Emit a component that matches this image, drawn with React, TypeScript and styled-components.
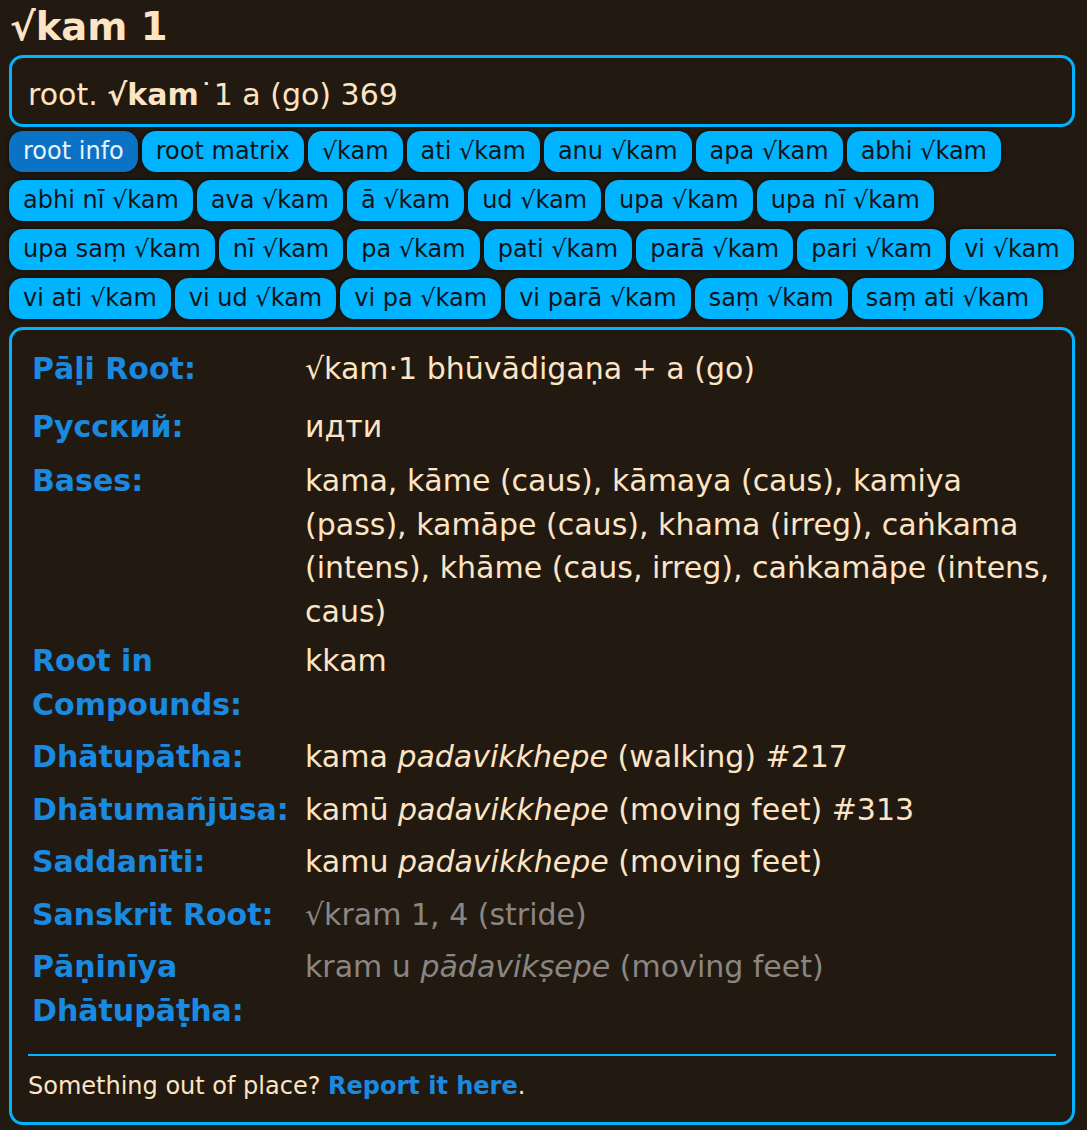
import React from "react";
import styled, { createGlobalStyle } from "styled-components";

const GlobalStyle = createGlobalStyle`
  html, body {
    margin: 0;
    padding: 0;
    background: #221a11;
  }
  body {
    font-family: "DejaVu Sans", "Noto Sans", sans-serif;
    color: #fde4c4;
  }
`;

const Page = styled.div`
  padding: 0 12px 8px 9px;
`;

const Title = styled.h1`
  margin: 0;
  padding: 2px 0 0 1px;
  font-size: 38.5px;
  line-height: 50px;
  font-weight: bold;
  color: #fde4c4;
`;

const Summary = styled.div`
  margin-top: 3px;
  border: 3px solid #00b4ff;
  border-radius: 14px;
  padding: 18px 16px 10px 16px;
  font-size: 30px;
  line-height: 38px;
`;

const ButtonBar = styled.div`
  display: flex;
  flex-wrap: wrap;
  gap: 8px 4px;
  margin-top: 4px;
`;

const Tab = styled.button<{ $active?: boolean }>`
  font-family: "DejaVu Sans", sans-serif;
  font-size: 24px;
  line-height: 29px;
  padding: 6px 14px;
  border: none;
  border-radius: 14px;
  background: ${(p) => (p.$active ? "#0a73c6" : "#00b4ff")};
  color: ${(p) => (p.$active ? "#eaf2fb" : "#101418")};
  box-shadow: 0 0 5px rgba(0, 0, 0, 0.7);
  cursor: pointer;
`;

const InfoBox = styled.div`
  margin-top: 8px;
  border: 3px solid #00b4ff;
  border-radius: 14px;
  padding: 17px 16px 18px 16px;
`;

const InfoRows = styled.div`
  display: flex;
  flex-direction: column;
  gap: 9px;
  padding-left: 4px;
  font-size: 30px;
  line-height: 43.5px;
`;

const Row = styled.div<{ $after?: number }>`
  display: grid;
  grid-template-columns: 273px 1fr;
  margin-bottom: ${(p) => p.$after ?? 0}px;
`;

const Label = styled.div`
  font-weight: bold;
  color: #1a8ae0;
`;

const Value = styled.div<{ $muted?: boolean }>`
  color: ${(p) => (p.$muted ? "#8a8682" : "#fde4c4")};
`;

const Footer = styled.div`
  margin-top: 22px;
  border-top: 2px solid #00b4ff;
  padding-top: 12px;
  font-size: 24px;
  line-height: 36px;
`;

const ReportLink = styled.a`
  color: #1a8ae0;
  font-weight: bold;
  text-decoration: none;
`;

const tabs = [
  "root info",
  "root matrix",
  "√kam",
  "ati √kam",
  "anu √kam",
  "apa √kam",
  "abhi √kam",
  "abhi nī √kam",
  "ava √kam",
  "ā √kam",
  "ud √kam",
  "upa √kam",
  "upa nī √kam",
  "upa saṃ √kam",
  "nī √kam",
  "pa √kam",
  "pati √kam",
  "parā √kam",
  "pari √kam",
  "vi √kam",
  "vi ati √kam",
  "vi ud √kam",
  "vi pa √kam",
  "vi parā √kam",
  "saṃ √kam",
  "saṃ ati √kam",
];

export default function App() {
  return (
    <>
      <GlobalStyle />
      <Page>
        <Title>√kam 1</Title>
        <Summary>
          root. <b>√kam</b>˙1 a (go) 369
        </Summary>
        <ButtonBar>
          {tabs.map((t, i) => (
            <Tab key={t} $active={i === 0}>
              {t}
            </Tab>
          ))}
        </ButtonBar>
        <InfoBox>
          <InfoRows>
            <Row $after={5}>
              <Label>Pāḷi Root:</Label>
              <Value>√kam·1 bhūvādigaṇa + a (go)</Value>
            </Row>
            <Row $after={2}>
              <Label>Русский:</Label>
              <Value>идти</Value>
            </Row>
            <Row $after={-3}>
              <Label>Bases:</Label>
              <Value>
                kama, kāme (caus), kāmaya (caus), kamiya (pass), kamāpe (caus),
                khama (irreg), caṅkama (intens), khāme (caus, irreg), caṅkamāpe
                (intens, caus)
              </Value>
            </Row>
            <Row>
              <Label>
                Root in
                <br />
                Compounds:
              </Label>
              <Value>kkam</Value>
            </Row>
            <Row>
              <Label>Dhātupātha:</Label>
              <Value>
                kama <i>padavikkhepe</i> (walking) #217
              </Value>
            </Row>
            <Row>
              <Label>Dhātumañjūsa:</Label>
              <Value>
                kamū <i>padavikkhepe</i> (moving feet) #313
              </Value>
            </Row>
            <Row>
              <Label>Saddanīti:</Label>
              <Value>
                kamu <i>padavikkhepe</i> (moving feet)
              </Value>
            </Row>
            <Row>
              <Label>Sanskrit Root:</Label>
              <Value $muted>√kram 1, 4 (stride)</Value>
            </Row>
            <Row>
              <Label>
                Pāṇinīya
                <br />
                Dhātupāṭha:
              </Label>
              <Value $muted>
                kram u <i>pādavikṣepe</i> (moving feet)
              </Value>
            </Row>
          </InfoRows>
          <Footer>
            Something out of place? <ReportLink href="#">Report it here</ReportLink>.
          </Footer>
        </InfoBox>
      </Page>
    </>
  );
}
